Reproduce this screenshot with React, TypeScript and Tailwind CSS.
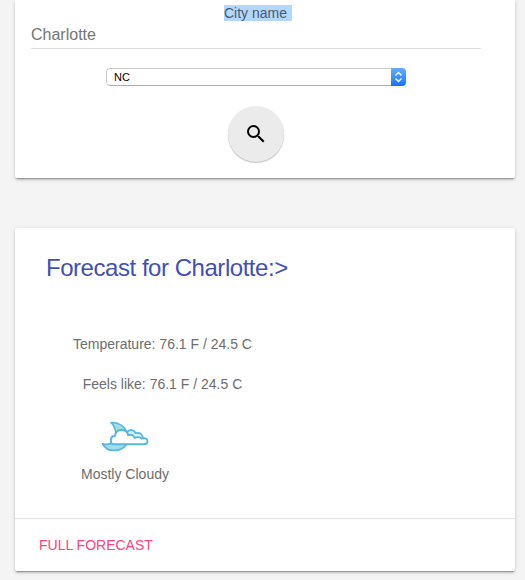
function SearchIcon() {
  return (
    <svg viewBox="0 0 24 24" className="block size-6" fill="#000">
      <path d="M15.5 14h-.79l-.28-.27A6.47 6.47 0 0 0 16 9.5 6.5 6.5 0 1 0 9.5 16c1.61 0 3.09-.59 4.23-1.57l.27.28v.79l5 4.99L20.49 19l-4.99-5zm-6 0C7.01 14 5 11.99 5 9.5S7.01 5 9.5 5 14 7.01 14 9.5 11.99 14 9.5 14z" />
    </svg>
  );
}

function MostlyCloudyIcon() {
  return (
    <svg viewBox="0 0 48 32" className="block h-8 w-12" strokeLinejoin="round" strokeLinecap="round">
      <path
        d="M1.600 23.800C5 24.600 9 24.500 11.500 22.500C17 18 15.500 8 10 2.500C17 2.500 23 5.500 25.500 11.500L25 25C20 32 6 33 1.600 23.800Z"
        fill="#a5dde6"
        stroke="#55b6de"
        strokeWidth="1.700"
      />
      <path
        d="M25 14C27 9 33 9 34.500 13.200C38.500 11.800 42 14.500 42 19L30 21Z"
        fill="#d5f0f5"
        stroke="#55b6de"
        strokeWidth="1.700"
      />
      <path
        d="M13 24.300C10.500 24.300 9.800 22.500 9.800 20.500C9.800 17.500 11.500 16 14 16C14.500 12 17 10 20.200 10C24 10 26.500 12 27.200 15.200C30 14 33 15 33.700 18C36 16.500 39 17 40.200 18.500C44.500 17.500 46.500 19 46.500 21.300C46.500 23.500 45 24.300 43 24.300Z"
        fill="#fff"
        stroke="#55b6de"
        strokeWidth="1.900"
      />
    </svg>
  );
}

function StateSelect() {
  return (
    <div className="ml-[75px] mt-[19px] flex h-[18px] w-[300px] overflow-hidden rounded-[4px] text-[11px] leading-[18px] text-black">
      <div className="flex-1 rounded-l-[4px] border border-r-0 border-[#c9c9c9] border-b-[#adadad] bg-white pl-[7px] leading-4">NC</div>
      <div className="flex w-[15px] items-center justify-center bg-linear-to-b from-[#65adfb] to-[#0874fd]">
        <svg viewBox="0 0 9 12" className="h-3 w-[9px]" fill="none" stroke="#fff" strokeWidth="1.300">
          <path d="M1.500 4.500l3-3 3 3M1.500 7.500l3 3 3-3" />
        </svg>
      </div>
    </div>
  );
}

const CARD_SHADOW =
  "shadow-[0_2px_2px_0_rgba(0,0,0,0.14),0_3px_1px_-2px_rgba(0,0,0,0.2),0_1px_5px_0_rgba(0,0,0,0.12)]";

export default function App() {
  return (
    <div className="h-[580px] w-[525px] overflow-hidden bg-[#f4f4f4] pl-[15px] font-['Liberation_Sans',Arial,sans-serif] text-[#6d6d6d]">
      <section className={`h-[178px] w-[500px] rounded-b-[2px] bg-white px-4 pt-[5px] ${CARD_SHADOW}`}>
        <div className="flex h-4">
          <span className="ml-[193px] w-[68px] whitespace-pre bg-[#b3d7ff] text-[14px] leading-4 text-[#4d5968]">City name </span>
        </div>
        <div className="h-7 w-[450px] border-b border-[#dedede] pt-1 text-[16px] leading-5 text-[#757575]">Charlotte</div>
        <StateSelect />
        <button className="ml-[197px] mt-5 flex size-14 items-center justify-center rounded-full bg-[#ebebeb] shadow-[0_1px_1.500px_0_rgba(0,0,0,0.12),0_1px_1px_0_rgba(0,0,0,0.16)]">
          <SearchIcon />
        </button>
      </section>
      <section className={`mt-[50px] flex h-[343px] w-[500px] flex-col rounded-[2px] bg-white ${CARD_SHADOW}`}>
        <h2 className="ml-[31px] mt-6 whitespace-nowrap text-[24px] leading-8 tracking-[-0.46px] text-[#3f51b5]">Forecast for Charlotte:&gt;</h2>
        <div className="ml-[15px] mt-[50px] flex w-[265px] flex-col items-center text-[14px] leading-5">
          <p className="whitespace-nowrap">Temperature: 76.1 F / 24.5 C</p>
          <p className="mt-5 whitespace-nowrap">Feels like: 76.1 F / 24.5 C</p>
        </div>
        <div className="ml-[60px] mt-[26px] flex w-[100px] flex-col items-center text-[14px] leading-5">
          <MostlyCloudyIcon />
          <p className="mt-[12px] whitespace-nowrap">Mostly Cloudy</p>
        </div>
        <div className="mt-auto h-[53px] border-t border-[#e3e3e3] pl-6 pt-4 text-[14px] leading-5 text-[#ff4081]">FULL FORECAST</div>
      </section>
    </div>
  );
}
